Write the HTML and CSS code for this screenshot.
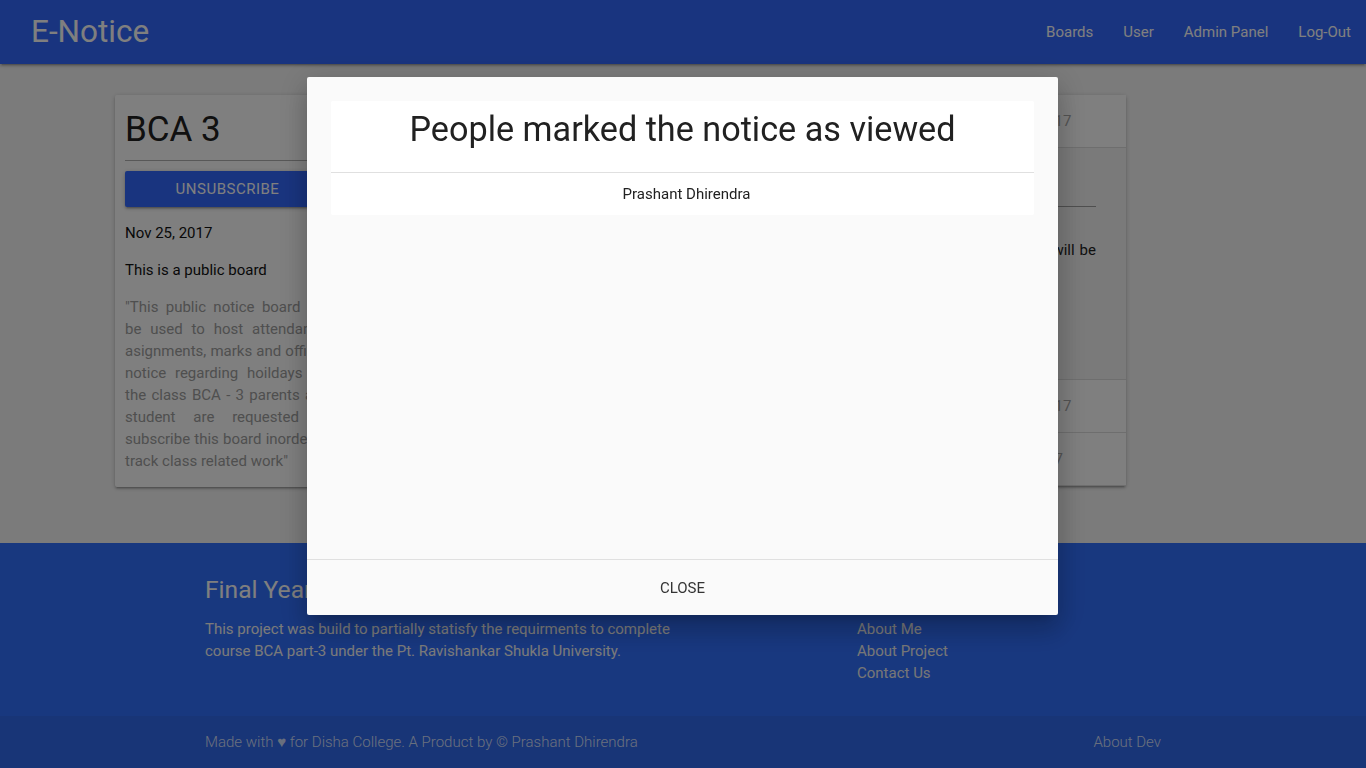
FILE: index.html
```html
<!DOCTYPE html>
<html lang="en">
<head>
<meta charset="utf-8">
<title>E-Notice</title>
<link rel="stylesheet" href="styles.css">
</head>
<body>
<nav class="navbar">
  <a class="brand" href="#">E-Notice</a>
  <ul class="nav-links">
    <li><a href="#">Boards</a></li>
    <li><a href="#">User</a></li>
    <li><a href="#">Admin Panel</a></li>
    <li><a href="#">Log-Out</a></li>
  </ul>
</nav>

<main class="main">
  <div class="board-grid">
    <section class="card board-card">
      <h4 class="board-title">BCA 3</h4>
      <a class="btn btn-block" href="#">Unsubscribe</a>
      <p class="board-date">Nov 25, 2017</p>
      <p class="board-type">This is a public board</p>
      <p class="board-desc">"This public notice board will be used to host attendance, asignments, marks and official notice regarding hoildays for the class BCA - 3 parents and student are requested to subscribe this board inorder to track class related work"</p>
    </section>

    <section class="card collapsible">
      <div class="c-header"><span class="c-title">Attendance for November</span><span class="c-date">Nov 25, 2017</span></div>
      <div class="c-body">
        <h5 class="c-body-title">Attendance for November</h5>
        <p class="c-body-text">The attendance of all the students of BCA - 3 for the month of November has been uploaded and will be discussed in the next parents meeting.</p>
        <div class="c-actions"><a class="btn-flat" href="#">Mark as viewed</a></div>
      </div>
      <div class="c-header"><span class="c-title">Assignment submission</span><span class="c-date">Nov 25, 2017</span></div>
      <div class="c-header"><span class="c-title">Holiday notice</span><span class="c-date">Nov 9, 2017</span></div>
    </section>
  </div>
</main>

<footer class="page-footer">
  <div class="container footer-row">
    <div class="footer-col-left">
      <h5 class="footer-heading">Final Year Project</h5>
      <p class="footer-text">This project was build to partially statisfy the requirments to complete course BCA part-3 under the Pt. Ravishankar Shukla University.</p>
    </div>
    <div class="footer-col-right">
      <h5 class="footer-heading">Links</h5>
      <ul class="footer-links">
        <li><a href="#">About Me</a></li>
        <li><a href="#">About Project</a></li>
        <li><a href="#">Contact Us</a></li>
      </ul>
    </div>
  </div>
  <div class="footer-copyright">
    <div class="container copyright-row">
      <span>Made with &#9829; for Disha College. A Product by &copy; Prashant Dhirendra</span>
      <a href="#">About Dev</a>
    </div>
  </div>
</footer>

<div class="modal-overlay"></div>
<div class="modal">
  <div class="modal-content">
    <ul class="collection">
      <li class="collection-header"><h4>People marked the notice as viewed</h4></li>
      <li class="collection-item">Prashant Dhirendra</li>
    </ul>
  </div>
  <div class="modal-footer">
    <a class="btn-flat btn-close" href="#">Close</a>
  </div>
</div>
</body>
</html>
```

FILE: styles.css
```css
* { box-sizing: border-box; }

html, body {
  margin: 0;
  padding: 0;
  height: 100%;
  overflow: hidden;
}

body {
  font-family: Roboto, "Liberation Sans", sans-serif;
  font-size: 15px;
  line-height: 1.5;
  color: rgba(0, 0, 0, 0.87);
  background: #f7f7f7;
}

a { text-decoration: none; color: inherit; }
ul { list-style: none; margin: 0; padding: 0; }

/* Navbar */
.navbar {
  height: 64px;
  background: #3369ff;
  display: flex;
  align-items: center;
  justify-content: space-between;
  padding-left: 31px;
  box-shadow: 0 2px 2px 0 rgba(0,0,0,.14), 0 3px 1px -2px rgba(0,0,0,.12), 0 1px 5px 0 rgba(0,0,0,.2);
  position: relative;
  z-index: 2;
}
.brand {
  color: #fff;
  font-size: 31.5px;
  line-height: 64px;
}
.nav-links { display: flex; }
.nav-links a {
  display: block;
  color: #fff;
  font-size: 15px;
  line-height: 64px;
  padding: 0 15px;
}

/* Main */
.main {
  padding: 31px 0 56px;
}
.board-grid {
  width: 1011px;
  margin-left: 115px;
  display: grid;
  grid-template-columns: 225px 1fr;
  gap: 15px;
  align-items: start;
}
.card {
  background: #fff;
  border-radius: 2px;
  box-shadow: 0 2px 2px 0 rgba(0,0,0,.14), 0 3px 1px -2px rgba(0,0,0,.12), 0 1px 5px 0 rgba(0,0,0,.2);
}
.board-card {
  padding: 10px 10px 0;
}
.board-title {
  margin: 0;
  padding-top: 5px;
  font-size: 35px;
  font-weight: 400;
  line-height: 40px;
  height: 56px;
  color: #212121;
  border-bottom: 1px solid #b0b0b0;
}
.btn {
  display: block;
  margin-top: 10px;
  height: 36px;
  line-height: 36px;
  background: #3369ff;
  color: #fff;
  text-align: center;
  text-transform: uppercase;
  font-size: 15px;
  letter-spacing: .5px;
  border-radius: 2px;
  box-shadow: 0 2px 2px 0 rgba(0,0,0,.14), 0 3px 1px -2px rgba(0,0,0,.12), 0 1px 5px 0 rgba(0,0,0,.2);
}
.board-card p {
  margin: 15px 0;
  line-height: 22px;
}
.board-date, .board-type { color: #111; }
.board-desc {
  color: #9e9e9e;
  text-align: justify;
}

/* Collapsible */
.c-header {
  display: flex;
  align-items: center;
  padding: 15px;
  line-height: 22px;
  border-bottom: 1px solid #ddd;
  background: #fff;
}
.c-title { flex: 1; color: #444; }
.c-date {
  width: 90px;
  margin-right: 37px;
  color: #a8a8a8;
}
.c-body {
  padding: 30px;
  background: #f5f5f5;
  border-bottom: 1px solid #ddd;
}
.c-body-title {
  margin: 0;
  font-size: 20px;
  font-weight: 400;
  line-height: 28px;
  border-bottom: 1px solid #9e9e9e;
}
.c-body-text {
  margin: 32px 0 0;
  line-height: 22px;
  text-align: justify;
  color: #222;
}
.c-actions {
  margin: 16px 0 14px;
  height: 36px;
}
.btn-flat {
  display: inline-block;
  height: 36px;
  line-height: 36px;
  padding: 0 16px;
  font-size: 14px;
  text-transform: uppercase;
  color: #343434;
}
.btn-close { font-size: 15px; }

/* Footer */
.page-footer {
  background: #3170ff;
  padding-top: 20px;
  color: #fff;
}
.container {
  width: 956px;
  margin: 0 auto;
}
.footer-row {
  display: flex;
  margin-bottom: 20px;
}
.footer-col-left { width: 467px; }
.footer-col-right { width: 304px; margin-left: 185px; }
.footer-heading {
  margin: 13.4px 0 15px;
  font-size: 24.6px;
  font-weight: 400;
  line-height: 27px;
  color: #fff;
}
.footer-text {
  margin: 0;
  line-height: 22px;
  color: #f5f5f5;
}
.footer-links { margin-bottom: 12px; }
.footer-links li { line-height: 22px; }
.footer-links a { color: #eeeeee; }

.footer-copyright {
  background: rgba(51, 51, 51, 0.08);
  height: 52px;
  font-weight: 300;
  color: rgba(255, 255, 255, 0.8);
}
.copyright-row {
  height: 52px;
  display: flex;
  align-items: center;
  justify-content: space-between;
}

/* Modal */
.modal-overlay {
  position: fixed;
  inset: 0;
  background: rgba(0, 0, 0, 0.5);
  z-index: 10;
}
.modal {
  position: fixed;
  top: 77px;
  left: calc(50% - 376px);
  width: 751px;
  height: 538px;
  background: #fafafa;
  border-radius: 2px;
  z-index: 11;
  display: flex;
  flex-direction: column;
  box-shadow: 0 16px 24px 2px rgba(0,0,0,.14), 0 6px 30px 5px rgba(0,0,0,.12), 0 8px 10px -7px rgba(0,0,0,.2);
}
.modal-content {
  flex: 1;
  padding: 24px;
}
.collection {
  background: #fff;
  border-radius: 2px;
}
.collection-header {
  padding: 10px 20px;
  border-bottom: 1px solid #e0e0e0;
  text-align: center;
}
.collection-header h4 {
  margin: 0 0 13.4px;
  font-size: 34.2px;
  font-weight: 400;
  line-height: 37.6px;
  color: #212121;
}
.collection-item {
  padding: 10px 20px 10px 28px;
  line-height: 22px;
  text-align: center;
  font-size: 15px;
  color: #212121;
}
.modal-footer {
  height: 56px;
  border-top: 1px solid rgba(0, 0, 0, 0.1);
  display: flex;
  align-items: center;
  justify-content: center;
}
```
